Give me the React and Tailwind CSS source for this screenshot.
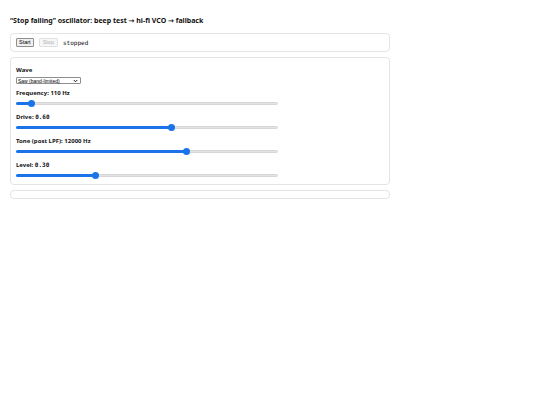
import React from "react";

const sans = { fontFamily: '"Noto Sans", "DejaVu Sans", sans-serif' };

function Slider({ pct }) {
  return (
    <div className="relative mt-[2px] h-[8px] w-[262px] flex items-center">
      <div className="h-[3px] w-full rounded-full bg-[#e3e3e3] border border-[#d6d6d6]" />
      <div
        className="absolute left-0 top-[2.5px] h-[3px] rounded-full bg-[#1a73e8]"
        style={{ width: `${pct}%` }}
      />
      <div
        className="absolute top-[0.5px] h-[7px] w-[7px] -ml-[3.5px] rounded-full bg-[#1a73e8]"
        style={{ left: `${pct}%` }}
      />
    </div>
  );
}

function Label({ children }) {
  return (
    <div className="text-[6px] leading-[8px] font-bold text-[#111]" style={sans}>
      {children}
    </div>
  );
}

const mono = { fontFamily: '"DejaVu Sans Mono", "Liberation Mono", monospace' };

export default function App() {
  return (
    <div className="w-[540px] h-[405px] bg-white px-[10px] pt-[16px]" style={sans}>
      <div className="text-[7px] leading-[10px] font-bold text-[#111]">
        “Stop failing” oscillator: beep test → hi-fi VCO → fallback
      </div>
      <div className="mt-[7px] w-[380px] flex flex-col gap-[5px]">
        <div className="border border-[#e4e4e4] rounded-[4px] px-[5px] py-[4px] flex items-center gap-[5px]">
          <div
            className="h-[9px] px-[2px] border border-[#8f8f8f] bg-[#efefef] rounded-[1px] text-[5.5px] leading-[7px] text-black flex items-center"
            style={{ fontFamily: '"Liberation Sans", Arial, sans-serif' }}
          >
            Start
          </div>
          <div
            className="h-[9px] px-[3px] border border-[#e0e0e0] bg-[#f7f7f7] rounded-[1px] text-[5.5px] leading-[7px] text-[#b0b0b0] flex items-center"
            style={{ fontFamily: '"Liberation Sans", Arial, sans-serif' }}
          >
            Stop
          </div>
          <div className="text-[6px] leading-[8px] text-[#111]" style={mono}>
            stopped
          </div>
        </div>

        <div className="border border-[#e4e4e4] rounded-[4px] px-[5px] pt-[8px] pb-[5px] flex flex-col">
          <Label>Wave</Label>
          <div
            className="mt-[3px] h-[7px] w-[65px] border border-[#8f8f8f] rounded-[1px] bg-white flex items-center justify-between px-[1px] text-[5px] leading-[6px] text-black"
            style={{ fontFamily: '"Liberation Sans", Arial, sans-serif' }}
          >
            <span>Saw (band-limited)</span>
            <svg width="5" height="4" viewBox="0 0 10 8" className="mr-[1px]">
              <path d="M1.5 2 L5 5.5 L8.5 2" stroke="#000" strokeWidth="1.8" fill="none" />
            </svg>
          </div>
          <div className="mt-[5px]">
            <Label>Frequency: 110 Hz</Label>
            <Slider pct={5.8} />
          </div>
          <div className="mt-[6px]">
            <Label>
              Drive: <span style={mono}>0.60</span>
            </Label>
            <Slider pct={59.5} />
          </div>
          <div className="mt-[6px]">
            <Label>Tone (post LPF): 12000 Hz</Label>
            <Slider pct={65} />
          </div>
          <div className="mt-[6px]">
            <Label>
              Level: <span style={mono}>0.30</span>
            </Label>
            <Slider pct={30.4} />
          </div>
        </div>

        <div className="border border-[#e4e4e4] rounded-[4px] h-[9px]" />
      </div>
    </div>
  );
}
